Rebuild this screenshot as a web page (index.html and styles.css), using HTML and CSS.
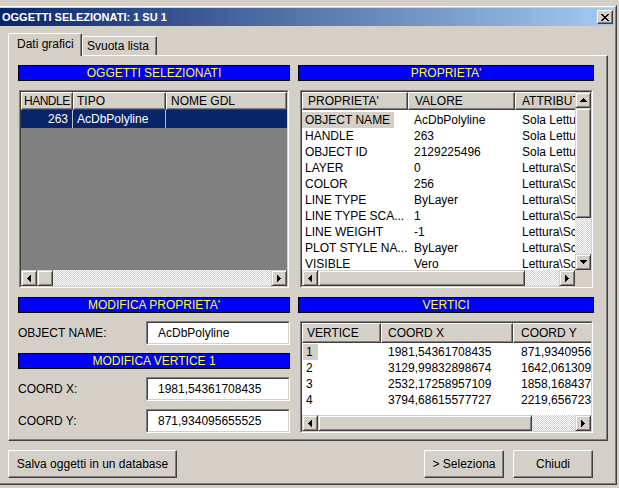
FILE: index.html
```html
<!DOCTYPE html>
<html>
<head>
<meta charset="utf-8">
<link rel="stylesheet" href="styles.css">
</head>
<body>
<div class="window">
  <div class="frame">
    <div class="titlebar">
      <span class="title">OGGETTI SELEZIONATI: 1 SU 1</span>
      <div class="close raised"><svg width="8" height="7" viewBox="0 0 8 7" shape-rendering="crispEdges"><path d="M0 0h2v1h-2z M6 0h2v1h-2z M1 1h2v1h-2z M5 1h2v1h-2z M2 2h4v1h-4z M3 3h2v1h-2z M2 4h4v1h-4z M1 5h2v1h-2z M5 5h2v1h-2z M0 6h2v1h-2z M6 6h2v1h-2z"/></svg></div>
    </div>
    <div class="client">
      <div class="tabs">
        <div class="tab active">Dati grafici</div>
        <div class="tab">Svuota lista</div>
      </div>
      <div class="panel">
        <div class="cols">
          <div class="col left">
            <div class="banner">OGGETTI SELEZIONATI</div>
            <div class="grid list">
              <div class="in">
                <div class="view gray">
                  <div class="hdr c-list">
                    <div class="hc tight">HANDLE</div>
                    <div class="hc p3">TIPO</div>
                    <div class="hc p4">NOME GDL</div>
                  </div>
                  <div class="row sel c-list">
                    <div class="cell num">263</div>
                    <div class="cell p4">AcDbPolyline</div>
                    <div class="cell"></div>
                  </div>
                </div>
                <div class="hscroll">
                  <div class="sb"><svg width="4" height="7" shape-rendering="crispEdges"><path d="M3 0h1v7h-1z M2 1h1v5h-1z M1 2h1v3h-1z M0 3h1v1h-1z"/></svg></div>
                  <div class="sb"></div>
                  <div class="track"></div>
                  <div class="sb"><svg width="4" height="7" shape-rendering="crispEdges"><path d="M0 0h1v7h-1z M1 1h1v5h-1z M2 2h1v3h-1z M3 3h1v1h-1z"/></svg></div>
                </div>
              </div>
            </div>
            <div class="banner">MODIFICA PROPRIETA'</div>
            <div class="field">
              <span class="label">OBJECT NAME:</span>
              <div class="input"><div class="in">AcDbPolyline</div></div>
            </div>
            <div class="banner gap8">MODIFICA VERTICE 1</div>
            <div class="field">
              <span class="label">COORD X:</span>
              <div class="input"><div class="in">1981,54361708435</div></div>
            </div>
            <div class="field">
              <span class="label">COORD Y:</span>
              <div class="input"><div class="in">871,934095655525</div></div>
            </div>
          </div>
          <div class="col right">
            <div class="banner">PROPRIETA'</div>
            <div class="grid props">
              <div class="in">
                <div class="gbody">
                  <div class="view white">
                    <div class="hdr c-props">
                      <div class="hc p5">PROPRIETA'</div>
                      <div class="hc p6">VALORE</div>
                      <div class="hc p6">ATTRIBUTI</div>
                    </div>
                    <div class="rows">
                      <div class="row c-props"><div class="cell"><span class="hl">OBJECT NAME</span></div><div class="cell p6">AcDbPolyline</div><div class="cell p7">Sola Lettura</div></div>
                      <div class="row c-props"><div class="cell p3">HANDLE</div><div class="cell p6">263</div><div class="cell p7">Sola Lettura</div></div>
                      <div class="row c-props"><div class="cell p3">OBJECT ID</div><div class="cell p6">2129225496</div><div class="cell p7">Sola Lettura</div></div>
                      <div class="row c-props"><div class="cell p3">LAYER</div><div class="cell p6">0</div><div class="cell p7">Lettura\Scrittura</div></div>
                      <div class="row c-props"><div class="cell p3">COLOR</div><div class="cell p6">256</div><div class="cell p7">Lettura\Scrittura</div></div>
                      <div class="row c-props"><div class="cell p3">LINE TYPE</div><div class="cell p6">ByLayer</div><div class="cell p7">Lettura\Scrittura</div></div>
                      <div class="row c-props"><div class="cell p3">LINE TYPE SCA...</div><div class="cell p6">1</div><div class="cell p7">Lettura\Scrittura</div></div>
                      <div class="row c-props"><div class="cell p3">LINE WEIGHT</div><div class="cell p6">-1</div><div class="cell p7">Lettura\Scrittura</div></div>
                      <div class="row c-props"><div class="cell p3">PLOT STYLE NA...</div><div class="cell p6">ByLayer</div><div class="cell p7">Lettura\Scrittura</div></div>
                      <div class="row c-props"><div class="cell p3">VISIBLE</div><div class="cell p6">Vero</div><div class="cell p7">Lettura\Scrittura</div></div>
                    </div>
                  </div>
                  <div class="vscroll">
                    <div class="sb"><svg width="7" height="4" shape-rendering="crispEdges"><path d="M3 0h1v1h-1z M2 1h3v1h-3z M1 2h5v1h-5z M0 3h7v1h-7z"/></svg></div>
                    <div class="sb vthumb"></div>
                    <div class="track"></div>
                    <div class="sb"><svg width="7" height="4" shape-rendering="crispEdges"><path d="M0 0h7v1h-7z M1 1h5v1h-5z M2 2h3v1h-3z M3 3h1v1h-1z"/></svg></div>
                  </div>
                </div>
                <div class="hrow">
                  <div class="hscroll">
                    <div class="sb"><svg width="4" height="7" shape-rendering="crispEdges"><path d="M3 0h1v7h-1z M2 1h1v5h-1z M1 2h1v3h-1z M0 3h1v1h-1z"/></svg></div>
                    <div class="sb pthumb"></div>
                    <div class="track"></div>
                    <div class="sb"><svg width="4" height="7" shape-rendering="crispEdges"><path d="M0 0h1v7h-1z M1 1h1v5h-1z M2 2h1v3h-1z M3 3h1v1h-1z"/></svg></div>
                  </div>
                  <div class="corner"></div>
                </div>
              </div>
            </div>
            <div class="banner">VERTICI</div>
            <div class="grid verts">
              <div class="in">
                <div class="view white">
                  <div class="hdr tall c-verts">
                    <div class="hc p4">VERTICE</div>
                    <div class="hc p6">COORD X</div>
                    <div class="hc p7">COORD Y</div>
                  </div>
                  <div class="rows1">
                    <div class="row c-verts"><div class="cell"><span class="hl v">1</span></div><div class="cell p7">1981,54361708435</div><div class="cell p8">871,934095655525</div></div>
                    <div class="row c-verts"><div class="cell p4">2</div><div class="cell p7">3129,99832898674</div><div class="cell p8">1642,06130987654</div></div>
                    <div class="row c-verts"><div class="cell p4">3</div><div class="cell p7">2532,17258957109</div><div class="cell p8">1858,16843765432</div></div>
                    <div class="row c-verts"><div class="cell p4">4</div><div class="cell p7">3794,68615577727</div><div class="cell p8">2219,65672345678</div></div>
                  </div>
                </div>
                <div class="hscroll">
                  <div class="sb"><svg width="4" height="7" shape-rendering="crispEdges"><path d="M3 0h1v7h-1z M2 1h1v5h-1z M1 2h1v3h-1z M0 3h1v1h-1z"/></svg></div>
                  <div class="sb vtthumb"></div>
                  <div class="track"></div>
                  <div class="sb"><svg width="4" height="7" shape-rendering="crispEdges"><path d="M0 0h1v7h-1z M1 1h1v5h-1z M2 2h1v3h-1z M3 3h1v1h-1z"/></svg></div>
                </div>
              </div>
            </div>
          </div>
        </div>
      </div>
      <div class="buttons">
        <div class="btn raised salva">Salva oggetti in un database</div>
        <div class="btn raised sel-btn">&gt; Seleziona</div>
        <div class="btn raised chiudi">Chiudi</div>
      </div>
    </div>
  </div>
</div>
</body>
</html>
```

FILE: styles.css
```css
* { box-sizing: border-box; }
html, body { margin: 0; padding: 0; }
body {
  width: 619px; height: 488px; overflow: hidden;
  background: #d4d0c8;
  font-family: "Liberation Sans", Arial, sans-serif;
  font-size: 12px; color: #000;
}
.window {
  margin-top: 5px; width: 617px; height: 480px;
  border-top: 1px solid #d4d0c8;
  border-right: 1px solid #404040;
  border-bottom: 1px solid #404040;
}
.frame {
  height: 100%;
  border-top: 1px solid #fff;
  border-right: 1px solid #808080;
  border-bottom: 1px solid #808080;
  padding: 1px 1px 1px 0;
  display: flex; flex-direction: column;
}
.titlebar {
  height: 18px; flex: none;
  display: flex; align-items: center;
  background: linear-gradient(to right, #0a246a, #a6caf0);
}
.title {
  flex: 1; color: #fff; font-weight: bold; font-size: 11px;
  padding-left: 2px; line-height: 18px; white-space: nowrap;
}
.raised {
  background: #d4d0c8;
  border: 1px solid; border-color: #fff #404040 #404040 #fff;
  box-shadow: inset -1px -1px #808080;
}
.close {
  width: 16px; height: 14px; margin-right: 1px;
  display: flex; align-items: center; justify-content: center;
  padding-right: 1px;
}
.close svg { display: block; }
.client { flex: 1; display: flex; flex-direction: column; }
.tabs {
  margin-top: 7px; height: 22px; margin-left: 8px;
  display: flex; align-items: flex-end;
}
.tab {
  height: 19px; width: 75px;
  border: 1px solid; border-bottom: none;
  border-color: #fff #404040 transparent #fff;
  box-shadow: inset -1px 0 #808080;
  border-radius: 2px 2px 0 0;
  padding: 1px 0 0 4px; line-height: 16px; white-space: nowrap;
  background: #d4d0c8;
}
.tab.active {
  height: 23px; width: 74px; margin-bottom: -1px;
  padding: 2px 0 0 8px;
  position: relative; z-index: 1;
}
.panel {
  height: 386px; width: 600px; margin-left: 8px;
  border: 1px solid; border-color: #fff #404040 #404040 #fff;
  box-shadow: inset -1px -1px #808080;
  padding: 9px 13px 0 9px;
}
.cols { display: flex; gap: 8px; }
.col { display: flex; flex-direction: column; }
.col.left { width: 272px; }
.col.right { width: 296px; }
.banner {
  height: 16px; flex: none;
  background: #0000ff; color: #ffff00;
  border: 1px solid #000;
  text-align: center; line-height: 14px; white-space: nowrap;
}
.gap8 { margin-top: 8px; }
.grid {
  flex: none;
  border: 1px solid; border-color: #808080 #fff #fff #808080;
}
.grid > .in {
  height: 100%;
  border: 1px solid; border-color: #404040 #d4d0c8 #d4d0c8 #404040;
  display: flex; flex-direction: column; overflow: hidden;
}
.grid.list { height: 198px; width: 270px; margin: 9px 1px 9px 1px; }
.grid.props { height: 198px; width: 293px; margin: 9px 0 9px 2px; }
.grid.verts { height: 112px; width: 293px; margin: 8px 0 0 2px; }
.view { flex: 1; overflow: hidden; min-width: 0; }
.gray { background: #808080; }
.white { background: #fff; }
.gbody { flex: 1; display: flex; min-height: 0; }
.hdr { display: grid; height: 18px; }
.hdr.tall { height: 20px; }
.c-list { grid-template-columns: 52px 93px 121px; }
.c-props { grid-template-columns: 106px 107px 107px; }
.c-verts { grid-template-columns: 79px 132px 140px; }
.hc {
  background: #d4d0c8;
  border: 1px solid; border-color: #fff #404040 #404040 #fff;
  box-shadow: inset -1px -1px #808080;
  white-space: nowrap; overflow: hidden;
  display: flex; align-items: center;
}
.tight { letter-spacing: -0.5px; padding-left: 2px; }
.p3 { padding-left: 3px; }
.p4 { padding-left: 4px; }
.p5 { padding-left: 5px; }
.p6 { padding-left: 6px; }
.p7 { padding-left: 7px; }
.p8 { padding-left: 8px; }
.row { display: grid; height: 16px; line-height: 16px; }
.cell { white-space: nowrap; overflow: hidden; }
.rows { padding-top: 2px; }
.rows1 { padding-top: 1px; }
.row.sel { height: 18px; line-height: 18px; background: #0a246a; color: #fff; }
.row.sel .cell { border-right: 1px solid #c0c0c0; }
.row.sel .cell:last-child { border-right: none; }
.num { text-align: right; padding-right: 4px; }
.hl { display: inline-block; background: #d4d0c8; padding: 0 4px 0 3px; }
.hl.v { margin-left: 1px; padding: 0 5px 0 3px; }
.hscroll { display: flex; height: 16px; flex: none; }
.hrow { display: flex; height: 16px; flex: none; }
.hrow .hscroll { flex: 1; }
.corner { width: 16px; background: #d4d0c8; }
.vscroll { display: flex; flex-direction: column; width: 16px; flex: none; }
.sb {
  width: 16px; height: 16px; flex: none;
  background: #d4d0c8;
  border: 1px solid; border-color: #d4d0c8 #404040 #404040 #d4d0c8;
  box-shadow: inset 1px 1px #fff, inset -1px -1px #808080;
  display: flex; align-items: center; justify-content: center;
}
.sb svg { display: block; }
.vthumb { height: 110px; }
.pthumb { width: 207px; }
.vtthumb { width: 214px; }
.track {
  flex: 1;
  background-image: repeating-conic-gradient(#fff 0 25%, #d4d0c8 0 50%);
  background-size: 2px 2px;
}
.field { display: flex; height: 24px; margin-top: 8px; flex: none; }
.label { width: 128px; line-height: 24px; white-space: nowrap; }
.input {
  width: 144px; height: 24px;
  border: 1px solid; border-color: #808080 #fff #fff #808080;
}
.input > .in {
  height: 100%; background: #fff;
  border: 1px solid; border-color: #404040 #d4d0c8 #d4d0c8 #404040;
  padding-left: 10px; line-height: 20px; white-space: nowrap;
}
.buttons {
  display: flex; margin-top: 9px; padding-left: 8px; padding-right: 21px;
  gap: 9px;
}
.btn {
  height: 28px; display: flex; align-items: center; justify-content: center;
  white-space: nowrap;
}
.salva { width: 169px; margin-right: auto; }
.sel-btn { width: 80px; }
.chiudi { width: 80px; }
```
